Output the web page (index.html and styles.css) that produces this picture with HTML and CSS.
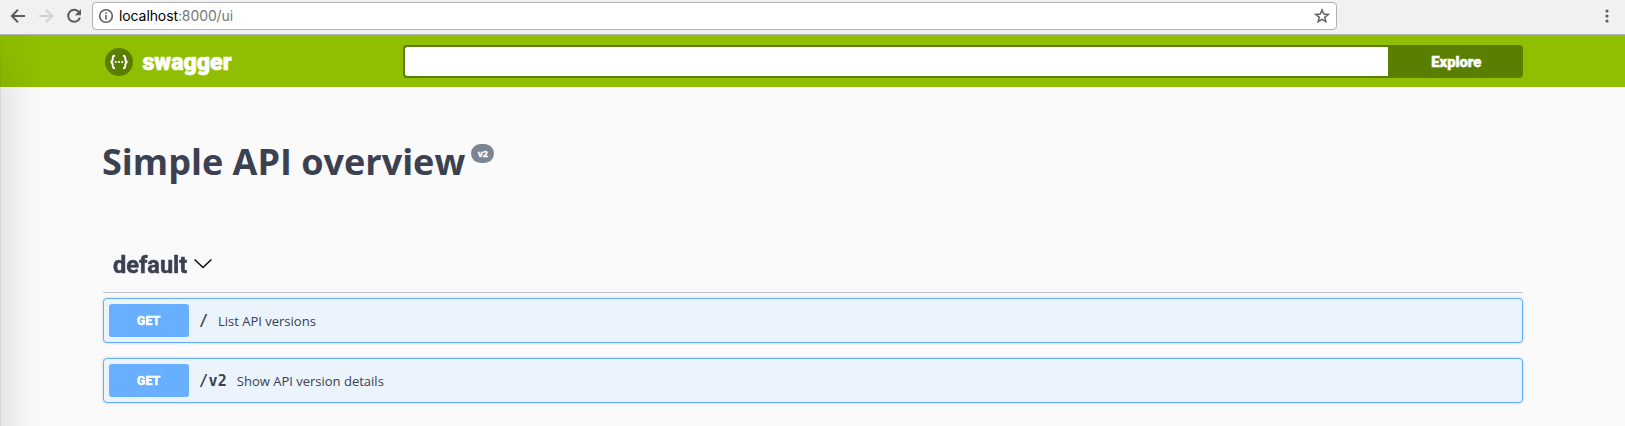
FILE: index.html
```
<!DOCTYPE html>
<html lang="en">
<head>
<meta charset="utf-8">
<title>Simple API overview</title>
<link rel="stylesheet" href="styles.css">
</head>
<body>
<div class="browser">
  <div class="nav">
    <svg width="16" height="16" viewBox="0 0 16 16" class="ico"><path d="M15 8H2M8 1.8L1.8 8L8 14.2"/></svg>
    <svg width="16" height="16" viewBox="0 0 16 16" class="ico off"><path d="M1 8H14M8 1.8L14.2 8L8 14.2"/></svg>
    <svg width="16" height="16" viewBox="0 0 16 16" class="ico"><path d="M13.2 4.4A6 6 0 1 0 13.9 9.6"/><path class="solid" d="M15 1V7.2H8.8Z"/></svg>
  </div>
  <div class="address">
    <svg width="16" height="16" viewBox="0 0 16 16" class="info-ico"><circle cx="8" cy="8" r="6.3"/><path d="M8 7V11.6M8 4.2V5.8"/></svg>
    <span class="url">localhost<span class="rest">:8000/ui</span></span>
    <svg width="16" height="16" viewBox="0 0 16 16" class="star"><path d="M8 1.9L9.7 6.1L14.2 6.4L10.7 9.3L11.9 13.7L8 11.3L4.1 13.7L5.3 9.3L1.8 6.4L6.3 6.1Z"/></svg>
  </div>
  <svg width="4" height="14" viewBox="0 0 4 14" class="dots"><circle cx="2" cy="2" r="1.6"/><circle cx="2" cy="7" r="1.6"/><circle cx="2" cy="12" r="1.6"/></svg>
</div>
<main class="page">
  <header class="topbar">
    <a class="logo">
      <svg width="28" height="28" viewBox="0 0 28 28"><circle cx="14" cy="14" r="14" fill="#5a7f00"/><g fill="none" stroke="#fff" stroke-width="1.9"><path d="M10 7.7C7.9 7.7 7.8 8.6 7.8 10C7.8 12.4 7.7 13.7 5.6 14C7.7 14.3 7.8 15.6 7.8 18C7.8 19.4 7.9 20.3 10 20.3"/><path d="M18 7.7C20.1 7.7 20.2 8.6 20.2 10C20.2 12.4 20.3 13.7 22.4 14C20.3 14.3 20.2 15.6 20.2 18C20.2 19.4 20.1 20.3 18 20.3"/></g><g fill="#fff"><circle cx="10.7" cy="14" r="1.1"/><circle cx="14" cy="14" r="1.1"/><circle cx="17.3" cy="14" r="1.1"/></g></svg>
      <svg width="92" height="32" viewBox="0 0 92 32" class="wordmark"><text x="0.5" y="22" textLength="89" lengthAdjust="spacingAndGlyphs">swagger</text></svg>
    </a>
    <div class="search"><input type="text" aria-label="Specification URL"><button><span>Explore</span></button></div>
  </header>
  <div class="wrapper">
    <h1 class="title">Simple API overview<span class="version">v2</span></h1>
    <h4 class="tag"><span class="tag-name">default</span>
      <svg width="20" height="12" viewBox="0 0 20 12"><path d="M1.6 1.5L10 9.5L18.4 1.5"/></svg>
    </h4>
    <div class="op"><span class="method"><span>GET</span></span><span class="path">/</span><span class="desc">List API versions</span></div>
    <div class="op"><span class="method"><span>GET</span></span><span class="path">/v2</span><span class="desc">Show API version details</span></div>
  </div>
  <div class="edge"></div>
</main>
</body>
</html>
```
FILE: styles.css
```
* { box-sizing: border-box; }
body { margin: 0; background: #fafafa; color: #3b4151; font-family: "Open Sans", sans-serif; height: 426px; overflow: hidden; }
.browser { height: 35px; background: #f1f1f1; border-bottom: 1px solid #b5b5b5; display: flex; align-items: flex-start; padding: 2px 0 0 10px; }
.nav { display: flex; gap: 12px; padding-top: 6px; width: 82px; flex: none; }
.ico { fill: none; stroke: #5c5c5c; stroke-width: 2; flex: none; }
.ico.off { stroke: #d2d2d2; }
.ico .solid { fill: #5c5c5c; stroke: none; }
.address { width: 1245px; height: 28px; border: 1px solid #b3b3b3; border-radius: 4px; background: #fff; display: flex; align-items: center; padding: 0 6px 0 5px; }
.info-ico { fill: none; stroke: #5c5c5c; stroke-width: 1.6; }
.url { font: 14px/20px Inter, sans-serif; color: #000; margin-left: 5px; letter-spacing: -0.1px; flex: 1; }
.rest { color: #777; }
.star { fill: none; stroke: #666; stroke-width: 1.5; }
.dots { margin: 7px 0 0 268px; fill: #5c5c5c; }
.page { position: relative; height: 391px; }
.topbar { height: 52px; background: #8fbf00; display: flex; padding: 10px 102px 0 105px; }
.logo { display: flex; width: 298px; padding-top: 3px; }
.wordmark { margin-left: 9px; overflow: visible; }
.wordmark text { font: 900 24px Roboto, sans-serif; fill: #fff; stroke: #fff; stroke-width: 0.7; }
.search { flex: 1; display: flex; height: 33px; }
.search input { flex: 1; border: 2px solid #5a7f00; border-right: 0; border-radius: 4px 0 0 4px; background: #fff; padding: 0 10px; }
.search button { width: 135px; border: 0; border-radius: 0 4px 4px 0; background: #5a7f00; color: #fff; font: 900 15.5px Roboto, sans-serif; padding: 0; }
.search button span { display: inline-block; transform: translateX(1px) scaleX(0.95); -webkit-text-stroke: 0.5px #fff; }
.wrapper { padding: 0 102px 0 103px; }
.title { margin: 50px 0 0 -1px; font-size: 36px; line-height: 49px; height: 49px; font-weight: 700; display: flex; align-items: flex-start; }
.version { margin: 7px 0 0 6px; width: 23px; height: 19px; border-radius: 10px; background: #7d8492; color: #fff; font-size: 9px; line-height: 19px; letter-spacing: -0.2px; -webkit-text-stroke: 0.3px #fff; text-align: center; }
.tag { margin: 57px 0 5px; height: 50px; border-bottom: 1px solid #bfc0c6; padding: 0 0 6px 10px; display: flex; align-items: center; gap: 6px; }
.tag-name { width: 74px; font: 700 24px/30px Roboto, sans-serif; -webkit-text-stroke: 0.5px #3b4151; transform: scaleX(0.98); transform-origin: left; }
.tag svg { fill: none; stroke: #111; stroke-width: 1.6; margin-top: -2px; }
.op { height: 45px; margin-bottom: 15px; border: 1px solid #61affe; border-radius: 4px; background: #ebf3fd; box-shadow: 0 0 3px rgba(0,0,0,.19); display: flex; align-items: center; padding: 0 5px; }
.method { width: 80px; height: 33px; border-radius: 3px; background: #68afff; color: #fff; font: 900 13.5px/33px Roboto, sans-serif; text-align: center; text-shadow: 0 1px 0 rgba(0,0,0,.1); }
.method span { display: inline-block; transform: scaleX(0.93); -webkit-text-stroke: 0.4px #fff; }
.path { margin-left: 10px; font: 700 15px/20px "DejaVu Sans Mono", monospace; letter-spacing: 0.4px; padding-top: 1px; }
.desc { margin-left: 9.5px; font-size: 13px; line-height: 18px; }
.edge { position: absolute; left: 0; top: 0; width: 44px; height: 391px; pointer-events: none; border-left: 1px solid rgba(0,0,0,.13); background: linear-gradient(to right, rgba(0,0,0,.075), rgba(0,0,0,.045) 35%, rgba(0,0,0,.015) 68%, transparent); -webkit-mask-image: linear-gradient(rgba(0,0,0,.25), #000 60px); mask-image: linear-gradient(rgba(0,0,0,.25), #000 60px); }
```
